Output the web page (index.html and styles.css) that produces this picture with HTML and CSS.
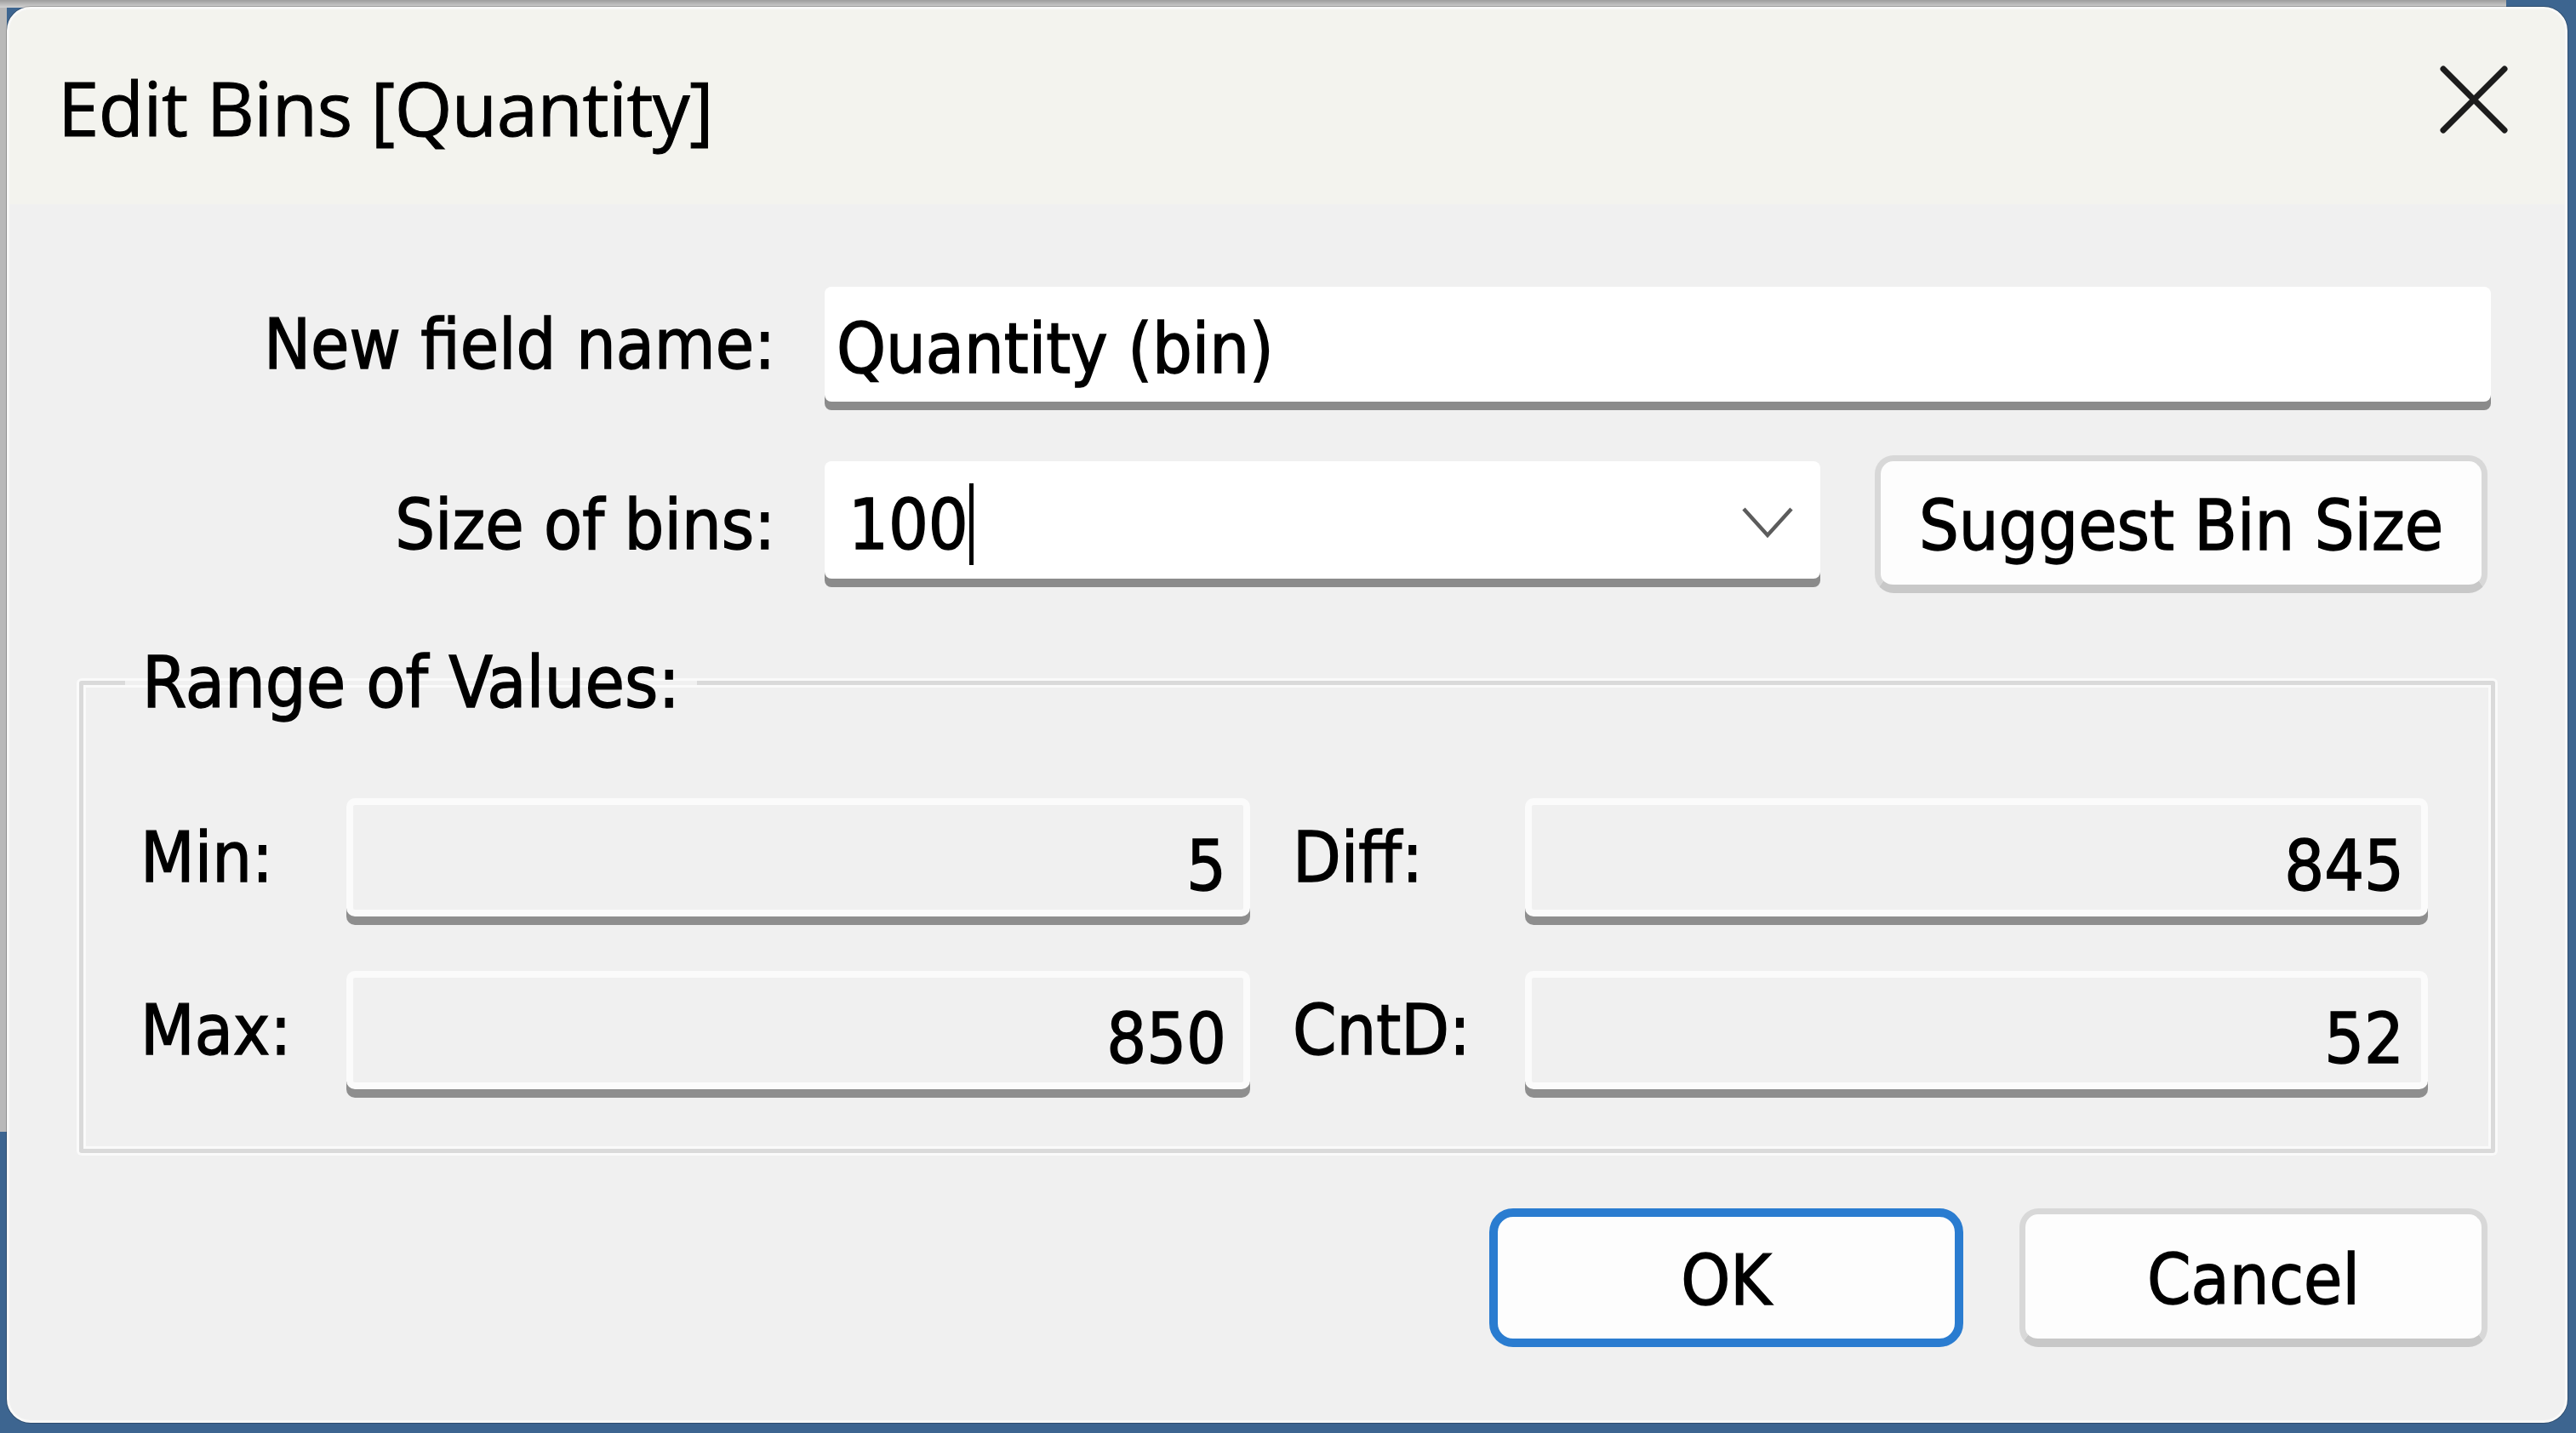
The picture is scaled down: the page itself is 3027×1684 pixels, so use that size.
FILE: index.html
```html
<!DOCTYPE html>
<html lang="en">
<head>
<meta charset="utf-8">
<title>Edit Bins [Quantity]</title>
<link rel="stylesheet" href="styles.css">
</head>
<body>
<div class="desktop">
  <div class="dialog">
    <div class="titlebar">
      <span class="title">Edit Bins [Quantity]</span>
      <span class="close"><svg viewBox="0 0 80 80" width="80" height="80"><path d="M4 4 L76 76 M76 4 L4 76" stroke="#1c1c1c" stroke-width="7" stroke-linecap="round" fill="none"/></svg></span>
    </div>
    <div class="body">
      <div class="form">
        <span class="lbl">New field name:</span>
        <div class="input"><span class="txt">Quantity (bin)</span></div>
        <span class="lbl">Size of bins:</span>
        <div class="row2">
          <div class="combo">
            <span class="txt num">100</span><span class="caret"></span>
            <svg class="chev" viewBox="0 0 62 38" width="62" height="38"><path d="M3 3 L31 34 L59 3" stroke="#5c5c5c" stroke-width="4.5" fill="none"/></svg>
          </div>
          <div class="btn suggest">Suggest Bin Size</div>
        </div>
      </div>
      <fieldset class="group">
        <legend class="legend">Range of Values:</legend>
        <div class="grid">
          <span class="glbl">Min:</span>
          <div class="ro">5</div>
          <span class="glbl second">Diff:</span>
          <div class="ro">845</div>
          <span class="glbl">Max:</span>
          <div class="ro">850</div>
          <span class="glbl second">CntD:</span>
          <div class="ro">52</div>
        </div>
      </fieldset>
      <div class="actions">
        <div class="btn ok">OK</div>
        <div class="btn cancel">Cancel</div>
      </div>
    </div>
  </div>
</div>
</body>
</html>
```
FILE: styles.css
```css
* { box-sizing: border-box; }
html, body { margin: 0; padding: 0; }
body {
  width: 3027px;
  height: 1684px;
  overflow: hidden;
  font-family: "DejaVu Sans Condensed", "DejaVu Sans", sans-serif;
  font-stretch: condensed;
  font-size: 82px;
  color: #000;
  -webkit-text-stroke: 1.4px #000;
}
.desktop {
  width: 3027px;
  height: 1684px;
  padding: 8px 0 0 8px;
  background-color: #3d6590;
  background-image: linear-gradient(#9d9d9d, #d3d3d3), linear-gradient(#b9b9b9, #b9b9b9);
  background-repeat: no-repeat;
  background-size: 2945px 9px, 8px 1330px;
  background-position: 0 0, 0 0;
}
.dialog {
  width: 3009px;
  height: 1664px;
  border-radius: 28px;
  border: 3px solid #f9f9f8;
  background: #f0f0f0;
  overflow: hidden;
  display: flex;
  flex-direction: column;
  box-shadow: 0 0 0 1px rgba(0, 0, 0, 0.22);
}
.titlebar {
  height: 229px;
  flex: none;
  background: #f3f3ee;
  display: flex;
  align-items: center;
  padding-left: 57px;
  padding-right: 67px;
}
.title {
  font-family: "Segoe UI", "Open Sans", sans-serif;
  font-stretch: normal;
  font-size: 87px;
  letter-spacing: -0.5px;
  color: #000;
  -webkit-text-stroke: 1px #000;
}
.close {
  margin-left: auto;
  display: flex;
  margin-bottom: 18px;
}
.body {
  flex: 1;
  padding: 97px 82px 0 82px;
}
.form {
  display: grid;
  grid-template-columns: 818px 1fr;
  column-gap: 58px;
  row-gap: 63px;
  align-items: center;
  margin-right: 5px;
}
.lbl {
  text-align: right;
  white-space: nowrap;
}
.input {
  height: 135px;
  background: #ffffff;
  border-radius: 8px;
  box-shadow: 0 10px 0 0 #8b8b8b;
  display: flex;
  align-items: center;
  padding-left: 14px;
  padding-top: 10px;
}
.txt { white-space: nowrap; }
.row2 {
  display: flex;
  align-items: flex-start;
  gap: 64px;
  margin-right: 4px;
}
.combo {
  width: 1170px;
  height: 138px;
  margin-top: 7px;
  background: #ffffff;
  border-radius: 8px;
  box-shadow: 0 10px 0 0 #8b8b8b;
  display: flex;
  align-items: center;
  padding-left: 28px;
  padding-top: 10px;
}
.caret {
  display: inline-block;
  width: 5px;
  height: 96px;
  background: #000;
  margin-left: 1px;
}
.chev {
  margin-left: auto;
  margin-right: 31px;
  margin-top: -4px;
}
.btn {
  height: 162px;
  background: #fdfdfd;
  border: 7px solid #d8d8d8;
  border-bottom: 10px solid #c8c8c8;
  border-radius: 22px;
  display: flex;
  align-items: center;
  justify-content: center;
  white-space: nowrap;
  padding-top: 6px;
}
.suggest { flex: 1; }
.group {
  margin: 57px 0 0 0;
  padding: 0;
  border: 5px solid #dadada;
  border-radius: 3px;
  box-shadow: 0 0 0 3px #fafafa, inset 0 0 0 3px #fafafa;
  min-width: 0;
}
.legend {
  margin-left: 49px;
  padding: 0 20px 0 20px;
  line-height: 96px;
  font-size: 84px;
}
.grid {
  display: grid;
  grid-template-columns: 242px 1062px 323px 1061px;
  row-gap: 64px;
  align-items: center;
  padding: 88px 76px 70px 67px;
}
.glbl { white-space: nowrap; }
.glbl.second { padding-left: 50px; }
.ro {
  height: 139px;
  background: #f0f0f0;
  border: 8px solid #fbfbfb;
  border-radius: 10px;
  box-shadow: 0 10px 0 0 #8e8e8e;
  display: flex;
  align-items: center;
  justify-content: flex-end;
  padding-right: 20px;
  padding-top: 20px;
}
.actions {
  display: flex;
  justify-content: flex-end;
  gap: 66px;
  margin-top: 65px;
  margin-right: 9px;
}
.ok {
  width: 557px;
  height: 163px;
  border: 10px solid #2a7cd0;
  border-radius: 28px;
}
.cancel {
  width: 550px;
  height: 163px;
}
```
